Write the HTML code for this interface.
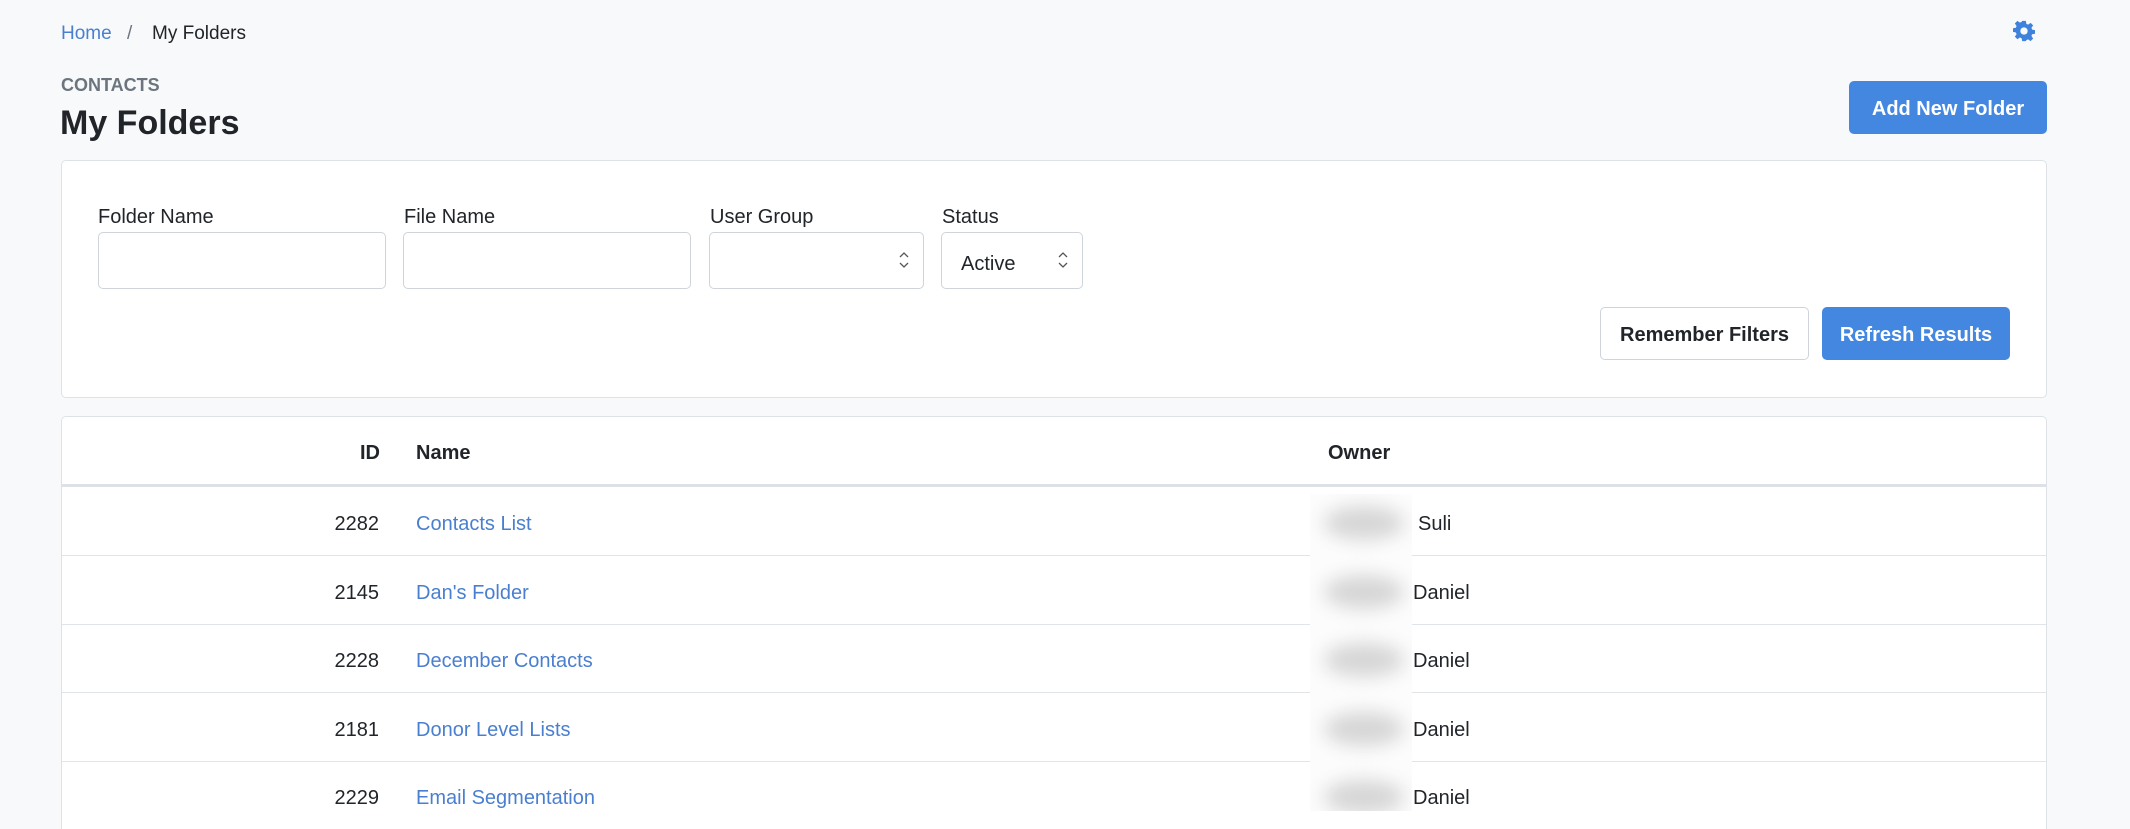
<!DOCTYPE html>
<html><head><meta charset="utf-8"><style>
*{box-sizing:border-box;margin:0;padding:0}
html,body{width:2130px;height:829px;overflow:hidden}
body{background:#f8f9fa;font-family:"Liberation Sans",sans-serif;color:#212529;position:relative}
.a{position:absolute;white-space:nowrap}
.card{position:absolute;background:#fff;border:1.5px solid #dee2e6;border-radius:5px}
.lbl{font-size:20px;color:#212529;top:206px}
.inp{position:absolute;top:232px;height:57px;border:1.5px solid #ced4da;border-radius:5px;background:#fff}
.btn{position:absolute;border-radius:5px;font-size:20px;font-weight:bold;display:flex;align-items:center;justify-content:center;padding-top:3px}
.blue{background:#4387e0;color:#fff}
.row{position:absolute;left:62px;width:1984px;height:69px;border-bottom:1.5px solid #e2e5e8}
.row span{position:absolute;top:3px;line-height:68px;font-size:20px}
.id{right:1667px;text-align:right}
.nm{left:354px;color:#4a7fd0}
.ow{left:1351px}
.blob{position:absolute;width:80px;height:34px;border-radius:50%;background:#d6d6d6;filter:blur(9px)}
.chev{position:absolute;right:14px;top:17px}
</style></head><body>
<div class="a" style="left:61px;top:23px;font-size:19px;color:#4a7fd0">Home</div>
<div class="a" style="left:127px;top:23px;font-size:19px;color:#6c757d">/</div>
<div class="a" style="left:152px;top:23px;font-size:19px">My Folders</div>
<svg class="a" style="left:2013px;top:20px" width="22" height="22" viewBox="0 0 24 24"><path fill="#3f82dc" d="M10 1h4l.6 3.2 1.9.8 2.7-1.9 2.8 2.8-1.9 2.7.8 1.9 3.1.5v4l-3.1.6-.8 1.9 1.9 2.7-2.8 2.8-2.7-1.9-1.9.8L14 23h-4l-.6-3.1-1.9-.8-2.7 1.9L2 18.2l1.9-2.7-.8-1.9L0 13v-4l3.1-.6.8-1.9L2 3.8 4.8 1l2.7 1.9 1.9-.8z"/><circle cx="12" cy="12" r="4" fill="#f8f9fa"/></svg>
<div class="a" style="left:61px;top:75px;font-size:18px;font-weight:bold;color:#6c757d">CONTACTS</div>
<div class="a" style="left:60px;top:104px;font-size:34px;font-weight:bold;color:#212529">My Folders</div>
<div class="btn blue" style="left:1849px;top:81px;width:198px;height:53px">Add New Folder</div>

<div class="card" style="left:61px;top:160px;width:1986px;height:238px"></div>
<div class="a lbl" style="left:98px">Folder Name</div>
<div class="a lbl" style="left:404px">File Name</div>
<div class="a lbl" style="left:710px">User Group</div>
<div class="a lbl" style="left:942px">Status</div>
<div class="inp" style="left:98px;width:288px"></div>
<div class="inp" style="left:403px;width:288px"></div>
<div class="inp" style="left:709px;width:215px"><svg class="chev" width="10" height="20" viewBox="0 0 10 20"><path d="M1 7l4-4 4 4M1 13l4 4 4-4" fill="none" stroke="#555" stroke-width="1.3"/></svg></div>
<div class="inp" style="left:941px;width:142px"><span class="a" style="left:19px;top:20px;font-size:20px">Active</span><svg class="chev" width="10" height="20" viewBox="0 0 10 20"><path d="M1 7l4-4 4 4M1 13l4 4 4-4" fill="none" stroke="#555" stroke-width="1.3"/></svg></div>
<div class="btn" style="left:1600px;top:307px;width:209px;height:53px;border:1.5px solid #ced4da;background:#fff;color:#212529">Remember Filters</div>
<div class="btn blue" style="left:1822px;top:307px;width:188px;height:53px">Refresh Results</div>

<div class="card" style="left:61px;top:416px;width:1986px;height:413px;border-bottom:none;border-radius:5px 5px 0 0"></div>
<div class="a" style="right:1750px;top:442px;font-size:20px;font-weight:bold">ID</div>
<div class="a" style="left:416px;top:442px;font-size:20px;font-weight:bold">Name</div>
<div class="a" style="left:1328px;top:442px;font-size:20px;font-weight:bold">Owner</div>
<div class="a" style="left:62px;top:484px;width:1984px;height:3px;background:#dee2e6"></div>

<div class="row" style="top:487px"><span class="id">2282</span><span class="nm">Contacts List</span><span class="ow" style="left:1356px">Suli</span></div>
<div class="row" style="top:556px"><span class="id">2145</span><span class="nm">Dan's Folder</span><span class="ow">Daniel</span></div>
<div class="row" style="top:624px"><span class="id">2228</span><span class="nm">December Contacts</span><span class="ow">Daniel</span></div>
<div class="row" style="top:693px"><span class="id">2181</span><span class="nm">Donor Level Lists</span><span class="ow">Daniel</span></div>
<div class="row" style="top:761px;height:68px;border-bottom:none"><span class="id">2229</span><span class="nm">Email Segmentation</span><span class="ow">Daniel</span></div>

<div class="a" style="left:1310px;top:494px;width:102px;height:317px;background:#fcfcfc;overflow:hidden">
<div class="blob" style="left:14px;top:12px"></div>
<div class="blob" style="left:14px;top:81px"></div>
<div class="blob" style="left:14px;top:149px"></div>
<div class="blob" style="left:14px;top:218px"></div>
<div class="blob" style="left:14px;top:286px"></div>
</div>
</body></html>
